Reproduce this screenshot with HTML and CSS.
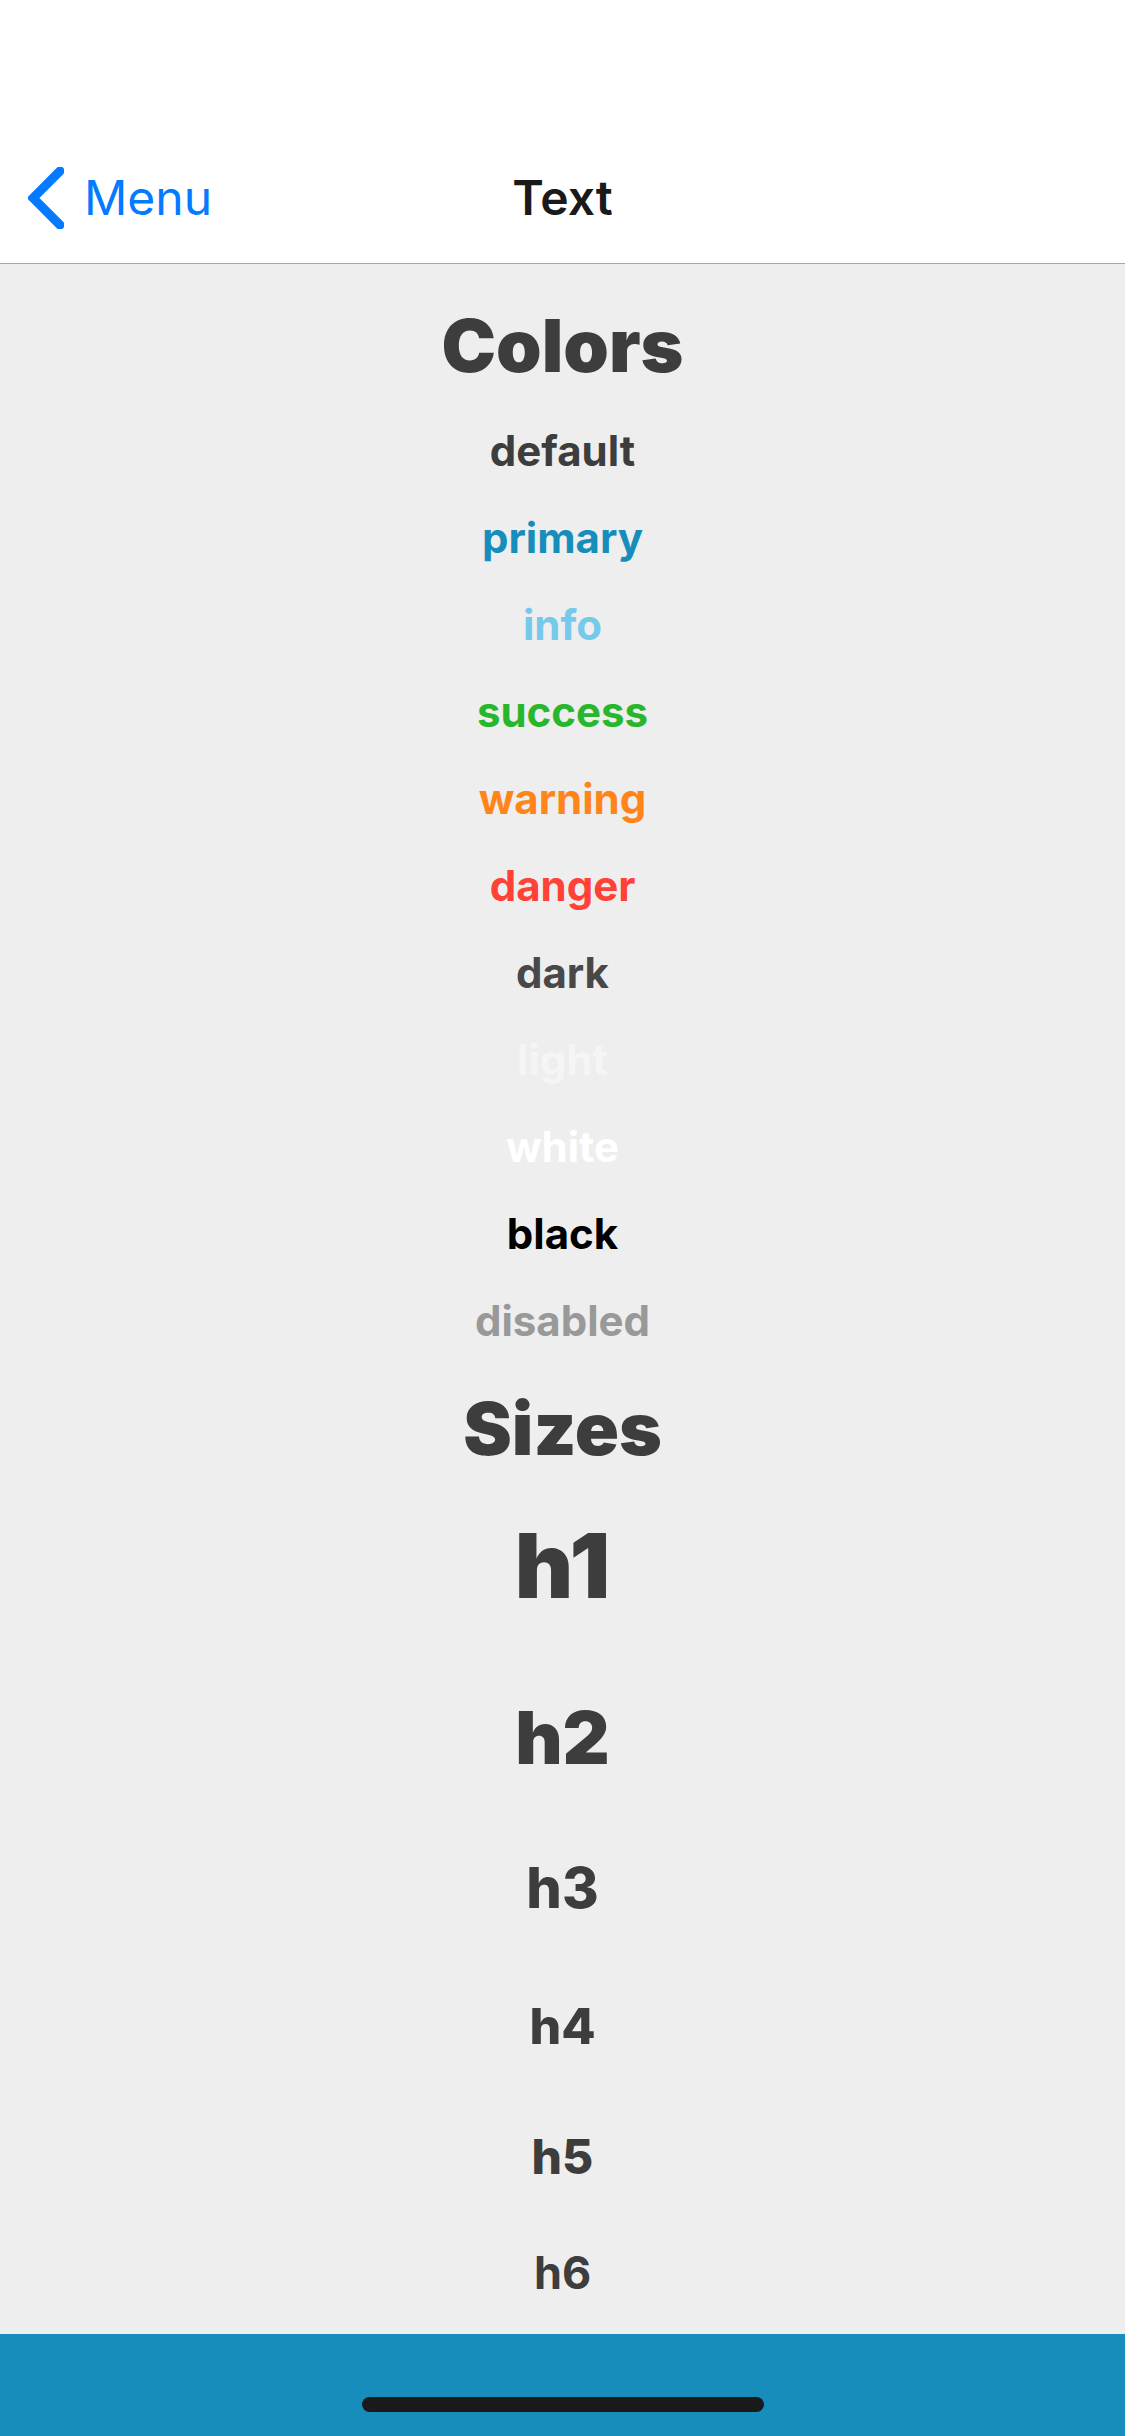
FILE: index.html
```html
<!DOCTYPE html>
<html lang="en">
<head>
<meta charset="utf-8">
<meta name="viewport" content="width=device-width, initial-scale=1">
<title>Text</title>
<link rel="stylesheet" href="styles.css">
</head>
<body>
<header class="navbar">
  <a class="back" href="#menu">
    <svg class="chevron" viewBox="0 0 36 62" width="36" height="62" aria-hidden="true"><path d="M32 4 5 31 32 58" fill="none" stroke="currentColor" stroke-width="9" stroke-linecap="round"/></svg>
    <span>Menu</span>
  </a>
  <h1 class="title">Text</h1>
</header>
<main class="content">
  <section class="group">
    <h2 class="heading">Colors</h2>
    <p class="label">default</p>
    <p class="label primary">primary</p>
    <p class="label info">info</p>
    <p class="label success">success</p>
    <p class="label warning">warning</p>
    <p class="label danger">danger</p>
    <p class="label dark">dark</p>
    <p class="label light">light</p>
    <p class="label white">white</p>
    <p class="label black">black</p>
    <p class="label disabled">disabled</p>
  </section>
  <section class="group">
    <h2 class="heading">Sizes</h2>
    <p class="h1">h1</p>
    <p class="h2">h2</p>
    <p class="h3">h3</p>
    <p class="h4">h4</p>
    <p class="h5">h5</p>
    <p class="h6">h6</p>
  </section>
</main>
<footer class="bottom"><div class="home-indicator"></div></footer>
</body>
</html>
```
FILE: styles.css
```css
* { box-sizing: border-box; }
body {
  margin: 0;
  min-height: 100vh;
  display: flex;
  flex-direction: column;
  background: #eeeeee;
  color: #3d3d3d;
  font-family: Inter, "Liberation Sans", sans-serif;
  text-align: center;
}
h1, h2, p { margin: 0; }
.navbar {
  display: grid;
  grid-template-columns: 1fr auto 1fr;
  align-items: center;
  padding: 132px 28px 0;
  height: 264px;
  background: #fff;
  border-bottom: 1px solid #a7a7aa;
}
.back {
  display: flex;
  align-items: center;
  gap: 20px;
  color: #037aff;
  font-size: 48px;
  line-height: 60px;
  text-decoration: none;
}
.title {
  color: #1a1a1a;
  font-size: 48px;
  line-height: 60px;
  font-weight: 600;
}
.content { flex: 1; padding-top: 17px; }
.group { padding-top: 3px; }
.heading { font-size: 73px; line-height: 123px; font-weight: 900; }
.label { font-size: 42px; line-height: 87px; font-weight: 700; }
.primary { color: #178dbb; }
.info { color: #75caeb; }
.success { color: #28b62c; }
.warning { color: #ff851b; }
.danger { color: #ff4136; }
.dark { color: #484848; }
.light { color: #f5f5f5; }
.white { color: #fff; }
.black { color: #000; }
.disabled { color: #999; }
.h1 { margin-top: 24px; font-size: 90px; line-height: 104px; font-weight: 900; }
.h2 { margin-top: 78px; font-size: 73px; line-height: 84px; font-weight: 900; }
.h3 { margin-top: 74px; font-size: 56px; line-height: 68px; font-weight: 800; }
.h4 { margin-top: 74px; font-size: 50px; line-height: 60px; font-weight: 800; }
.h5 { margin-top: 72px; font-size: 48px; line-height: 58px; font-weight: 800; }
.h6 { margin-top: 60px; font-size: 45px; line-height: 54px; font-weight: 700; }
.bottom {
  display: flex;
  justify-content: center;
  padding: 63px 0 24px;
  background: #178dbb;
}
.home-indicator { width: 402px; height: 15px; border-radius: 8px; background: #1a1a1a; }
```
